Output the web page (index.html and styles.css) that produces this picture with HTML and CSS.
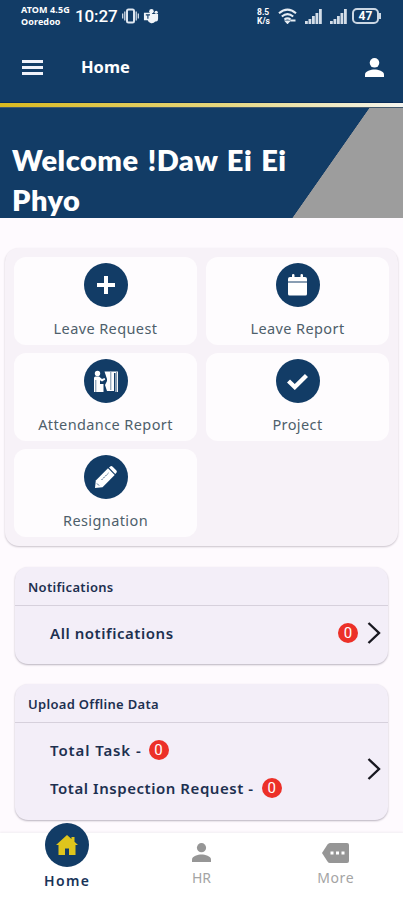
FILE: index.html
```html
<!DOCTYPE html>
<html lang="en">
<head>
  <meta charset="UTF-8" />
  <meta name="viewport" content="width=device-width, initial-scale=1.0"/>
  <title>Home</title>
  <link rel="stylesheet" href="styles.css">
</head>
<body>

  <header>
    <div class="status-bar">
      <div class="carrier"><span>ATOM 4.5G</span><span>Ooredoo</span></div>
      <span class="clock">10:27</span>
      <svg class="vibrate" width="17" height="16" viewBox="0 0 17 16" fill="none" stroke="#dfe7f0">
        <rect x="5" y="1.5" width="7" height="13" rx="1.5" stroke-width="2"/>
        <path d="M2.8 3.5v9M14.2 3.5v9M.7 5.5v5M16.3 5.5v5" stroke-width="1.2"/>
      </svg>
      <svg class="teams" width="16" height="16" viewBox="0 0 17 16" fill="#f1f5f9">
        <circle cx="9" cy="3" r="2.4"/>
        <circle cx="14" cy="4" r="1.7"/>
        <path d="M1 4.5h8.5V6H16v5.5a2.5 2.5 0 0 1-3 2.3A4.5 4.5 0 0 1 5 12.5H1z"/>
        <path d="M3 6.8h4.4M5.2 6.8v4" stroke="#123c66" stroke-width="1.2"/>
      </svg>
      <div class="speed"><span>8.5</span><span>K/s</span></div>
      <svg class="wifi" width="19" height="16" viewBox="0 0 19 16" fill="none" stroke="#e6edf4" stroke-width="2.1">
        <path d="M1 5.2Q9.5-2 18 5.2M3.8 8.5q5.7-4.6 11.4 0M6.4 11.5q3.1-2.4 6.2 0"/>
        <path d="M8 13.3h3l-1.5 1.7zM12.5 12.500h5" stroke-width="1.8"/>
      </svg>
      <svg class="signal" width="17" height="15" viewBox="0 0 17 15" fill="#d3dde8">
        <path d="M0 12h2.8v3H0zM3.5 10h2.8v5H3.5zM7 7h2.8v8H7zM10.5 4h2.8v11h-2.8zM14 0h2.8v15H14z"/>
      </svg>
      <svg class="signal" width="17" height="15" viewBox="0 0 17 15" fill="#d3dde8">
        <path d="M0 12h2.8v3H0zM3.5 10h2.8v5H3.5zM7 7h2.8v8H7zM10.5 4h2.8v11h-2.8zM14 0h2.8v15H14z"/>
      </svg>
      <div class="battery">47</div>
      <div class="battery-tip"></div>
    </div>
    <div class="toolbar">
      <svg width="21" height="15" viewBox="0 0 21 15" fill="#f0f2fa">
        <path d="M0 0h21v3H0zM0 6h21v3H0zM0 12h21v3H0z"/>
      </svg>
      <h1>Home</h1>
      <svg class="profile" width="19" height="19" viewBox="0 0 19 19" fill="#fff">
        <circle cx="9.5" cy="4.8" r="4.8"/>
        <path d="M0 19v-2.5c0-3.3 6-5 9.5-5s9.5 1.700 9.5 5V19z"/>
      </svg>
    </div>
  </header>
  <div class="stripe"></div>

  <section class="banner">
    <h2>Welcome !Daw Ei Ei<br>Phyo</h2>
  </section>

  <main>
    <section class="menu">
      <div class="tile">
        <div class="icon">
          <svg width="18" height="18" viewBox="0 0 18 18"><path d="M9 0v18M0 9h18" stroke="#fff" stroke-width="4"/></svg>
        </div>
        <span class="label">Leave Request</span>
      </div>
      <div class="tile">
        <div class="icon">
          <svg width="19" height="22" viewBox="0 0 19 22" fill="#fff">
            <path d="M0 7.500V5q0-2 2-2h2V1q0-1 1.200-1T6.500 1v2h6V1q0-1 1.200-1T15 1v2h2q2 0 2 2v2.500z"/>
            <path d="M0 8.500h19V20q0 1.500-1.500 1.500h-16Q0 21.500 0 20z"/>
          </svg>
        </div>
        <span class="label">Leave Report</span>
      </div>
      <div class="tile">
        <div class="icon">
          <svg width="24" height="22" viewBox="0 0 24 22" fill="#fff">
            <circle cx="3.500" cy="3.500" r="2.700"/>
            <path d="M0 8q0-1.500 1.500-1.500H5l3 2.500 2.500-1 .8 1.500L8 11.500 6 10.200V14h3.500v8H0z"/>
            <path d="M10.500 1.500H24V22h-2.500V3H20v18h-7l-2-6 2-4V9z"/>
            <path d="M1.800 10v12M16.800 2v18M22.600 2v20" stroke="#123c66" stroke-width=".6"/>
          </svg>
        </div>
        <span class="label">Attendance Report</span>
      </div>
      <div class="tile">
        <div class="icon">
          <svg width="21" height="17" viewBox="0 0 21 17" fill="none"><path d="M1.500 8l6.300 6L19.500 2.500" stroke="#fff" stroke-width="4.400"/></svg>
        </div>
        <span class="label">Project</span>
      </div>
      <div class="tile">
        <div class="icon">
          <svg width="22" height="22" viewBox="0 0 22 22" fill="#fff">
            <path d="M0 22l.8-7.500L13 2.300l6.700 6.700L7.500 21.200z"/>
            <path d="M14 1.500l1-.8q1.300-1.200 2.700 0l3.500 3.500q1.300 1.300 0 2.700l-1 1z"/>
            <path d="M6.500 14l7-7M2 17.500L4.500 20" stroke="#123c66" stroke-width=".8" stroke-dasharray="2 .8"/>
          </svg>
        </div>
        <span class="label">Resignation</span>
      </div>
    </section>

    <section class="card notifications">
      <h3>Notifications</h3>
      <div class="card-body">
        <p>All notifications</p>
        <span class="badge">0</span>
        <svg class="chevron" width="14" height="22" viewBox="0 0 14 22" fill="none" stroke="#181820" stroke-width="2.4"><path d="M1.5 1L12 11 1.5 21"/></svg>
      </div>
    </section>

    <section class="card offline">
      <h3>Upload Offline Data</h3>
      <div class="card-body">
        <div class="totals">
          <p><span class="task">Total Task -</span><span class="badge">0</span></p>
          <p><span>Total Inspection Request -</span><span class="badge">0</span></p>
        </div>
        <svg class="chevron" width="14" height="22" viewBox="0 0 14 22" fill="none" stroke="#181820" stroke-width="2.4"><path d="M1.5 1L12 11 1.5 21"/></svg>
      </div>
    </section>
  </main>

  <nav>
    <a class="active">
      <div class="icon">
        <svg width="22" height="20" viewBox="0 0 22 20" fill="#dfc51c"><path d="M11 0L0 10h2.500v10H9v-6.500h4V20h6.500V10H22l-3.500-3.200V2h-3v2z"/></svg>
      </div>
      <span>Home</span>
    </a>
    <a>
      <svg width="19" height="19" viewBox="0 0 19 19" fill="#969696">
        <circle cx="9.5" cy="4.7" r="4.6"/>
        <path d="M0 19v-2.5c0-3.3 6-5 9.5-5s9.5 1.700 9.5 5V19z"/>
      </svg>
      <span>HR</span>
    </a>
    <a>
      <svg width="27" height="20" viewBox="0 0 27 20" fill="#969696">
        <path d="M0 10L5.500 1.500Q6.500 0 8 0h17q2 0 2 2v16q0 2-2 2H8q-1.500 0-2.500-1.500z"/>
        <path d="M8.500 8.600h3v3h-3zM14 8.600h3v3h-3zM19.500 8.600h3v3h-3z" fill="#fff"/>
      </svg>
      <span class="more">More</span>
    </a>
  </nav>

</body>
</html>
```

FILE: styles.css
```css
* {
  box-sizing: border-box;
}

body {
  margin: 0;
  height: 900px;
  display: flex;
  flex-direction: column;
  overflow: hidden;
  background: #fefafe;
  font-family: "Noto Sans", sans-serif;
  color: #1d3050;
}

h1, h2, h3, p {
  margin: 0;
}

svg {
  display: block;
  flex-shrink: 0;
}

span {
  white-space: nowrap;
}

header {
  height: 102px;
  background: #123c66;
  color: #fff;
}

.status-bar {
  height: 32px;
  padding: 0 22px 0 21px;
  display: flex;
  align-items: center;
}

.carrier {
  width: 54px;
  display: flex;
  flex-direction: column;
  font: bold 9px/12px "Noto Sans", sans-serif;
  letter-spacing: .1px;
}

.clock {
  width: 47px;
  font: 500 17px/30px Roboto, sans-serif;
  letter-spacing: -.1px;
}

.teams {
  margin-left: 4px;
}

.speed {
  margin-left: auto;
  width: 21px;
  display: flex;
  flex-direction: column;
  gap: 1px;
  font: bold 8.5px/8px Roboto, sans-serif;
}

.signal {
  margin-left: 8px;
}

.battery {
  margin-left: 5px;
  width: 27px;
  height: 16px;
  border: 2px solid #cbd7e3;
  border-radius: 5px;
  font: bold 12px/12px Roboto, sans-serif;
  text-align: center;
}

.battery-tip {
  width: 2px;
  height: 6px;
  background: #cbd7e3;
}

.toolbar {
  height: 70px;
  padding: 0 19px 0 22px;
  display: flex;
  align-items: center;
}

.toolbar h1 {
  margin-left: 38px;
  font: bold 16.5px/24px "Noto Sans", sans-serif;
}

.profile {
  margin-left: auto;
}

.stripe {
  height: 6px;
  background: linear-gradient(to right, #d9b91f, #e6d77e 55%, #f6f6f0);
  border-top: 1px solid #082c59;
  border-bottom: 1px solid #435a6e;
}

.banner {
  height: 110px;
  padding: 32px 12px 0;
  background: linear-gradient(to bottom right, #123c66 50%, #9d9d9d 50.5%) 292px 0 / 77px 110px no-repeat,
    linear-gradient(to right, #123c66 292px, #9d9d9d 292px);
}

.banner h2 {
  font: 800 29px/40px Lato, sans-serif;
  letter-spacing: .5px;
  word-spacing: 1.8px;
  white-space: nowrap;
  color: #fff;
}

.menu {
  margin: 30px 5px 0;
  height: 298px;
  padding: 9px;
  display: grid;
  grid-template-columns: 183px 183px;
  grid-auto-rows: 88px;
  gap: 8px 9px;
  background: #f7f2f8;
  border-radius: 14px;
  box-shadow: 0 1px 2px #c9c2cb;
}

.tile {
  padding-top: 6px;
  display: flex;
  flex-direction: column;
  align-items: center;
  background: #fefcfe;
  border-radius: 12px;
}

.icon {
  width: 44px;
  height: 44px;
  display: flex;
  align-items: center;
  justify-content: center;
  flex-shrink: 0;
  background: #123c66;
  border-radius: 50%;
}

.label {
  margin-top: 10px;
  font-size: 14.5px;
  line-height: 22px;
  letter-spacing: .4px;
  color: #4e5f6b;
}

.card {
  margin: 0 15px;
  display: flex;
  flex-direction: column;
  background: #f3eef8;
  border-radius: 13px;
  box-shadow: 0 1px 2px #b9b2be;
}

.notifications {
  margin-top: 21px;
  height: 97px;
}

.offline {
  margin-top: 20px;
  height: 136px;
}

.card h3 {
  height: 39px;
  padding-left: 13px;
  font-size: 13px;
  font-weight: 600;
  line-height: 41px;
  letter-spacing: .3px;
  border-bottom: 1px solid #d6d0dc;
}

.card-body {
  flex: 1;
  padding: 0 7px 5px 35px;
  display: flex;
  align-items: center;
}

.card p {
  height: 38px;
  display: flex;
  align-items: center;
  font-size: 15px;
  font-weight: 600;
  letter-spacing: .55px;
}

.card-body > p {
  margin-right: auto;
}

.card .task {
  letter-spacing: .9px;
}

.totals {
  margin-right: auto;
}

.badge {
  width: 20px;
  height: 20px;
  border-radius: 50%;
  background: #ec3028;
  color: #fff;
  font: 400 15px/20px Roboto, sans-serif;
  letter-spacing: 0;
  text-align: center;
}

.totals .badge {
  margin-left: 8px;
}

.totals .task + .badge {
  margin-left: 7px;
}

.chevron {
  margin-left: 9px;
}

nav {
  margin-top: 13px;
  height: 67px;
  display: grid;
  grid-template-columns: repeat(3, 134.3px);
  background: #fff;
  box-shadow: 0 -1px 2px #f1edf2;
}

nav a {
  padding-top: 10px;
  display: flex;
  flex-direction: column;
  align-items: center;
  font-size: 14px;
  line-height: 20px;
  color: #a4a4a4;
}

nav a > span {
  margin-top: 6px;
}

nav .more {
  margin-top: 5px;
  letter-spacing: .6px;
}

.active {
  padding-top: 0;
  color: #183458;
  font-weight: 600;
  letter-spacing: 1.3px;
}

.active .icon {
  margin-top: -10px;
}

nav .active > span {
  margin-top: 4px;
}
```
